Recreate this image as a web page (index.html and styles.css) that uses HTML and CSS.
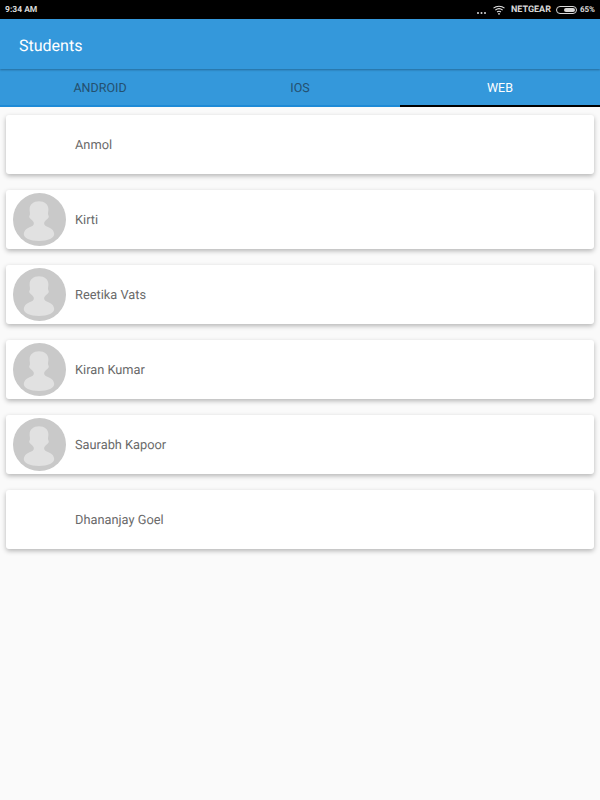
FILE: index.html
```html
<!DOCTYPE html>
<html lang="en">
<head>
  <meta charset="UTF-8">
  <meta name="viewport" content="width=device-width, initial-scale=1.0">
  <title>Students</title>
  <link rel="stylesheet" href="styles.css">
</head>
<body>
  <svg class="svg-defs" width="0" height="0">
    <symbol id="avatar" viewBox="0 0 53 53">
      <circle cx="26.5" cy="26.500" r="26.500" fill="#c9c9c9"/>
      <path d="M26 8.300c-5.500 0-9.400 3-9.400 8.200 0 2 .6 3.500.3 5-.2 1-.9 1.500-.6 2.800.4 1.400 2.700 2.400 3.900 4.200.5.800.8 1.500.8 2.500h10c0-1 .3-1.700.8-2.500 1.200-1.800 3.500-2.800 3.900-4.200.3-1.300-.4-1.800-.6-2.800-.3-1.500.3-3 .3-5 0-5.200-3.900-8.200-9.400-8.200z" fill="#e1e1e1"/>
      <path d="M21 30c0 2.500-2 3.200-4.500 4.200-3.500 1.300-5.700 3.800-5.700 6.800 0 4 6 7 15.200 7s15.200-3 15.200-7c0-3-2.200-5.500-5.700-6.800-2.500-1-4.500-1.700-4.500-4.200z" fill="#e1e1e1"/>
    </symbol>
  </svg>

  <div class="status-bar">
    <span class="status-time">9:34 AM</span>
    <div class="status-right">
      <svg class="status-dots" width="9" height="4" viewBox="0 0 9 4" fill="#d8d8d8">
        <circle cx="1" cy="2" r="1"/>
        <circle cx="4.500" cy="2" r="1"/>
        <circle cx="8" cy="2" r="1"/>
      </svg>
      <svg class="wifi-icon" width="12" height="10" viewBox="0 0 12 10" fill="none" stroke="#e4e4e4" stroke-width="1.100">
        <path d="M.5 3.200C3.600.6 8.400.6 11.500 3.200"/>
        <path d="M2.300 5.100c2.200-1.800 5.200-1.800 7.400 0"/>
        <path d="M4.100 7c1.100-.9 2.700-.9 3.800 0"/>
        <circle cx="6" cy="8.800" r=".9" fill="#e4e4e4" stroke="none"/>
      </svg>
      <span class="status-network">NETGEAR</span>
      <div class="battery"><div class="battery-level"></div></div>
      <span class="status-percent">65%</span>
    </div>
  </div>

  <header class="app-bar">
    <h1>Students</h1>
  </header>

  <nav class="tabs">
    <div class="tab">ANDROID</div>
    <div class="tab">IOS</div>
    <div class="tab active">WEB</div>
  </nav>

  <main class="list">
    <div class="card">
      <div class="avatar-slot"></div>
      <span class="name">Anmol</span>
    </div>
    <div class="card">
      <div class="avatar-slot"><svg width="53" height="53"><use href="#avatar"/></svg></div>
      <span class="name">Kirti</span>
    </div>
    <div class="card">
      <div class="avatar-slot"><svg width="53" height="53"><use href="#avatar"/></svg></div>
      <span class="name">Reetika Vats</span>
    </div>
    <div class="card">
      <div class="avatar-slot"><svg width="53" height="53"><use href="#avatar"/></svg></div>
      <span class="name">Kiran Kumar</span>
    </div>
    <div class="card">
      <div class="avatar-slot"><svg width="53" height="53"><use href="#avatar"/></svg></div>
      <span class="name">Saurabh Kapoor</span>
    </div>
    <div class="card">
      <div class="avatar-slot"></div>
      <span class="name">Dhananjay Goel</span>
    </div>
  </main>
</body>
</html>
```

FILE: styles.css
```css
* { margin: 0; padding: 0; box-sizing: border-box; }

html, body { height: 100%; }

body {
  font-family: Roboto, sans-serif;
  text-rendering: geometricPrecision;
  background: #fafafa;
  color: #666;
  overflow: hidden;
}

.svg-defs { position: absolute; }

.status-bar {
  height: 19px;
  background: #000;
  color: #d8d8d8;
  font-size: 8.5px;
  font-weight: 700;
  display: flex;
  justify-content: space-between;
  align-items: center;
  padding: 0 5px;
}

.status-right { display: flex; align-items: center; }
.status-dots { margin: 6px 7px 0 0; }
.wifi-icon { margin-right: 6px; }
.status-network { font-size: 9px; margin-right: 5px; }
.status-percent { font-size: 8px; margin-left: 3px; }

.battery {
  width: 21px;
  height: 8px;
  border: 1px solid #d8d8d8;
  border-radius: 4px;
  padding: 1px;
}

.battery-level {
  width: 65%;
  height: 100%;
  background: #d8d8d8;
  border-radius: 2px;
  margin-left: auto;
}

.app-bar {
  height: 50px;
  background: #3498db;
  display: flex;
  align-items: center;
  padding: 2px 19px 0;
  box-shadow: 0 1px 2px rgba(0, 0, 0, 0.3);
  position: relative;
}

.app-bar h1 {
  font-size: 16px;
  font-weight: 400;
  color: #fff;
}

.tabs {
  height: 38px;
  background: #3498db;
  display: flex;
}

.tab {
  flex: 1;
  display: flex;
  align-items: center;
  justify-content: center;
  padding-top: 1px;
  font-size: 12.500px;
  color: #24506f;
  box-shadow: inset 0 -2px 0 #1e8ad6;
}

.tab.active {
  color: #fff;
  box-shadow: inset 0 -2px 0 #000;
}

.list {
  padding: 8px 6px;
  display: flex;
  flex-direction: column;
  gap: 16px;
}

.card {
  height: 59px;
  background: #fff;
  border-radius: 3px;
  display: flex;
  align-items: center;
  padding: 0 7px;
  box-shadow: 0 2px 5px rgba(0, 0, 0, 0.28);
}

.avatar-slot {
  width: 53px;
  height: 53px;
  margin-right: 9px;
  flex-shrink: 0;
}

.name { font-size: 12.800px; color: #6a6a6a; padding-top: 2px; }
```
